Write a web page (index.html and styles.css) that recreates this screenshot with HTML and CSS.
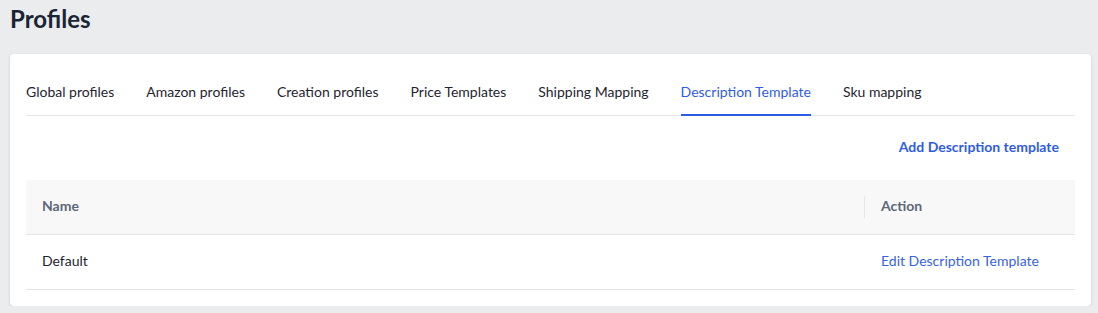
FILE: index.html
```html
<!DOCTYPE html>
<html lang="en">
<head>
  <meta charset="UTF-8">
  <title>Profiles</title>
  <link rel="stylesheet" href="styles.css">
</head>
<body>
  <h1 class="page-title">Profiles</h1>
  <div class="card">
    <div class="tabs">
      <a class="tab">Global profiles</a>
      <a class="tab">Amazon profiles</a>
      <a class="tab">Creation profiles</a>
      <a class="tab">Price Templates</a>
      <a class="tab">Shipping Mapping</a>
      <a class="tab active">Description Template</a>
      <a class="tab">Sku mapping</a>
    </div>
    <div class="toolbar">
      <a class="add-link">Add Description template</a>
    </div>
    <table class="list">
      <thead>
        <tr><th class="col-name">Name</th><th class="col-action"><span class="sep"></span>Action</th></tr>
      </thead>
      <tbody>
        <tr><td>Default</td><td class="col-action"><a class="row-link">Edit Description Template</a></td></tr>
      </tbody>
    </table>
  </div>
</body>
</html>
```

FILE: styles.css
```css
/* Base */
body { margin:0; padding:0 0 0 10px; background:#ebecee; font-family:Lato, "Open Sans", sans-serif; font-size:14px; color:#1f2430; }
.page-title { margin:4px 0 21px; font-size:24px; font-weight:700; color:#1b2434; line-height:29px; }
/* Card */
.card { width:1049px; background:#fff; border-radius:4px; padding:16px; box-shadow:0 1px 3px rgba(0,0,0,0.15); }
/* Tabs */
.tabs { display:flex; gap:32px; border-bottom:1px solid #e4e5e7; height:45px; }
.tab { display:block; padding:12px 0; line-height:20px; height:20px; border-bottom:2px solid transparent; color:#1f2430; cursor:pointer; }
.tab.active { color:#2f5ce5; border-bottom-color:#2b5ce6; }
/* Toolbar */
.toolbar { display:flex; justify-content:flex-end; padding:21px 16px 23px 0; line-height:20px; }
.add-link { color:#2f5ce5; font-weight:700; cursor:pointer; }
/* Table */
.list { width:100%; border-collapse:collapse; }
.list th, .list td { text-align:left; padding:0 16px 2px; height:52px; line-height:20px; }
.list th { background:#f8f8f8; color:#5b6778; font-weight:700; border-bottom:1px solid #e4e5e7; }
.list td { border-bottom:1px solid #e4e5e7; color:#1f2430; }
.col-action { width:178px; position:relative; }
.sep { position:absolute; left:-1px; top:16px; height:22px; border-left:1px solid #e6e6e6; }
.row-link { color:#3763e0; cursor:pointer; }
```
